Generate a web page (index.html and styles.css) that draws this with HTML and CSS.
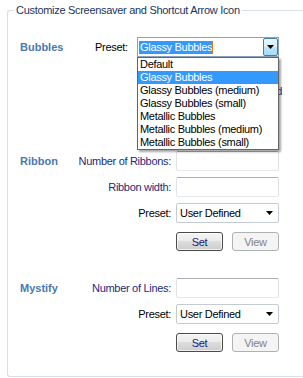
FILE: index.html
```html
<!DOCTYPE html>
<html>
<head>
<meta charset="utf-8">
<link rel="stylesheet" href="styles.css">
</head>
<body>
<fieldset class="group">
  <legend class="group-title">Customize Screensaver and Shortcut Arrow Icon</legend>
  <div class="content">
    <section class="bubbles">
      <div class="bubbles-row">
        <span class="section-label bubbles-label">Bubbles</span>
        <span class="bubbles-preset">Preset:</span>
        <div class="combo">
          <div class="combo-text"><span class="sel">Glassy Bubbles</span><span class="caret"></span></div>
          <div class="combo-btn"><svg width="7" height="4" viewBox="0 0 7 4"><polygon points="0,0 7,0 3.5,4" fill="#000"/></svg></div>
          <ul class="dropdown">
            <li>Default</li>
            <li class="active">Glassy Bubbles</li>
            <li>Glassy Bubbles (medium)</li>
            <li>Glassy Bubbles (small)</li>
            <li>Metallic Bubbles</li>
            <li>Metallic Bubbles (medium)</li>
            <li>Metallic Bubbles (small)</li>
          </ul>
        </div>
      </div>
      <div class="bubbles-more"><span class="link">Advanced</span></div>
    </section>

    <section class="opts ribbon">
      <span class="section-label">Ribbon</span>
      <span class="field-label blue">Number of Ribbons:</span>
      <div class="textbox"></div>
      <span class="field-label blue">Ribbon width:</span>
      <div class="textbox"></div>
      <span class="field-label">Preset:</span>
      <div class="select"><span>User Defined</span><svg width="7" height="4" viewBox="0 0 7 4"><polygon points="0,0 7,0 3.5,4" fill="#000"/></svg></div>
      <div class="buttons"><div class="btn btn-default">Set</div><div class="btn btn-disabled">View</div></div>
    </section>

    <section class="opts mystify">
      <span class="section-label">Mystify</span>
      <span class="field-label blue">Number of Lines:</span>
      <div class="textbox"></div>
      <span class="field-label">Preset:</span>
      <div class="select"><span>User Defined</span><svg width="7" height="4" viewBox="0 0 7 4"><polygon points="0,0 7,0 3.5,4" fill="#000"/></svg></div>
      <div class="buttons"><div class="btn btn-default">Set</div><div class="btn btn-disabled">View</div></div>
    </section>
  </div>
</fieldset>
</body>
</html>
```

FILE: styles.css
```css
html, body {
  margin: 0;
  padding: 0;
  background: #fff;
  overflow: hidden;
  width: 303px;
  height: 378px;
}

body {
  font-family: "Liberation Sans", Arial, sans-serif;
  font-size: 11px;
  letter-spacing: -0.3px;
  color: #000;
}

.group {
  box-sizing: border-box;
  margin: 4px 0 0 7px;
  padding: 0;
  width: 296px;
  height: 373px;
  border: 1px solid #d5dfe5;
  border-right: 0;
  border-radius: 3px 0 0 3px;
  min-width: 0;
}

.group-title {
  margin-left: 6px;
  padding: 0 2px;
  line-height: 13px;
  color: #1a3461;
}

.content {
  padding: 20px 0 0 12px;
}

.section-label {
  font-weight: bold;
  color: #4a78b2;
  letter-spacing: 0;
}

/* Bubbles */
.bubbles-row {
  display: flex;
  align-items: center;
  height: 20px;
}

.bubbles-label {
  width: 75px;
}

.bubbles-preset {
  width: 42px;
}

.combo {
  position: relative;
  box-sizing: border-box;
  width: 142px;
  height: 20px;
  border: 1px solid #8aa1bd;
  display: flex;
  background: #fff;
}

.combo-text {
  flex: 1;
  display: flex;
  align-items: center;
  padding-left: 1px;
}

.sel {
  background: #3399ff;
  color: #fff;
  line-height: 13px;
  padding: 0 0 0 1px;
}

.caret {
  width: 1px;
  height: 13px;
  background: #e8731a;
}

.combo-btn {
  box-sizing: border-box;
  width: 15px;
  height: 18px;
  border: 1px solid #3c7fb1;
  border-radius: 2px;
  background: linear-gradient(#eaf6fd 0%, #d9f0fc 50%, #bee6fd 50%, #a7d9f5 100%);
  display: flex;
  align-items: center;
  justify-content: center;
}

.dropdown {
  position: absolute;
  top: calc(100% + 1px);
  left: -1px;
  box-sizing: border-box;
  width: 142px;
  margin: 0;
  padding: 0;
  list-style: none;
  border: 1px solid #646464;
  background: #fff;
  box-shadow: 2px 2px 2px rgba(0, 0, 0, 0.35);
  z-index: 5;
}

.dropdown li {
  height: 13px;
  line-height: 13px;
  padding-left: 2px;
  white-space: nowrap;
}

.dropdown li.active {
  background: #3399ff;
  color: #fff;
}

.bubbles-more {
  height: 94px;
  box-sizing: border-box;
  padding-top: 28px;
  width: 262px;
  text-align: right;
  line-height: 13px;
}

.link {
  color: #1a3a9a;
  white-space: nowrap;
}

/* Option grids */
.opts {
  display: grid;
  grid-template-columns: 51px 95px 103px;
  column-gap: 5px;
  row-gap: 6px;
  align-items: center;
}

.opts .section-label {
  grid-column: 1;
  grid-row: 1;
}

.field-label {
  grid-column: 2;
  text-align: right;
  white-space: nowrap;
}

.field-label.blue {
  color: #1b2a80;
}

.textbox,
.select,
.buttons {
  grid-column: 3;
}

.textbox {
  box-sizing: border-box;
  height: 20px;
  border: 1px solid;
  border-color: #abadb3 #dbdfe6 #e3e9ef #e2e3ea;
  border-radius: 2px;
  background: #fff;
}

.select {
  box-sizing: border-box;
  height: 20px;
  border: 1px solid #c5cbd3;
  border-radius: 2px;
  background: #fff;
  display: flex;
  align-items: center;
  justify-content: space-between;
  padding: 0 5px 0 3px;
}

.buttons {
  display: flex;
  gap: 9px;
  margin-top: 3px;
}

.btn {
  box-sizing: border-box;
  width: 47px;
  height: 19px;
  border-radius: 3px;
  display: flex;
  align-items: center;
  justify-content: center;
}

.btn-default {
  border: 1px solid #4a4a4a;
  background: linear-gradient(#f4f4f4 0%, #ebebeb 50%, #dddddd 50%, #cdcdcd 100%);
  box-shadow: inset 0 0 0 1px rgba(255, 255, 255, 0.7);
  color: #1b1b7a;
}

.btn-disabled {
  border: 1px solid #adb2b5;
  background: #f4f4f4;
  color: #838383;
}

.mystify {
  margin-top: 27px;
}
```
